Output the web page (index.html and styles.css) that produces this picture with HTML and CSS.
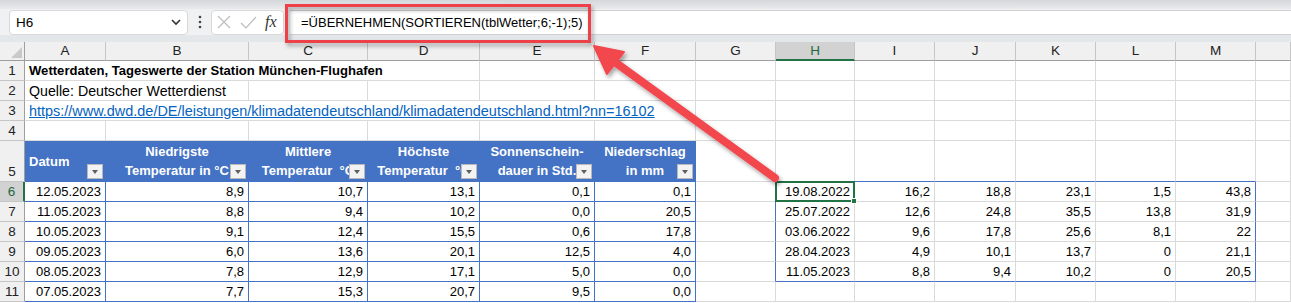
FILE: index.html
```html
<!DOCTYPE html>
<html lang="de">
<head>
<meta charset="UTF-8">
<title>Wetterdaten</title>
<link rel="stylesheet" href="styles.css">
</head>
<body>
<div class="app">
    <div class="ribbon-edge"></div>
    <div class="formula-bar">
        <div class="name-box">
            <span>H6</span>
            <svg width="10" height="7" viewBox="0 0 10 7"><polyline points="1,1 5,5 9,1" fill="none" stroke="#333" stroke-width="1.6"/></svg>
        </div>
        <div class="grip">
            <svg width="4" height="14" viewBox="0 0 4 14"><circle cx="2" cy="2" r="1.3" fill="#444"/><circle cx="2" cy="7" r="1.3" fill="#444"/><circle cx="2" cy="12" r="1.3" fill="#444"/></svg>
        </div>
        <div class="fx-box">
            <svg width="16" height="14" viewBox="0 0 16 14"><path d="M2 1 L14 13 M14 1 L2 13" stroke="#bdbdbd" stroke-width="1.2" fill="none"/></svg>
            <svg width="17" height="13" viewBox="0 0 17 13"><path d="M1 7 L6 12 L16 1" stroke="#bdbdbd" stroke-width="1.2" fill="none"/></svg>
            <span class="fx">fx</span>
        </div>
        <div class="formula-input">=ÜBERNEHMEN(SORTIEREN(tblWetter;6;-1);5)</div>
    </div>
    <div class="bar-gap"></div>

    <table class="sheet">
        <colgroup>
            <col class="w-rh"><col class="w-a"><col class="w-b"><col class="w-c"><col class="w-d"><col class="w-e"><col class="w-f">
            <col class="w-g"><col class="w-h"><col class="w-i"><col class="w-j"><col class="w-k"><col class="w-l"><col class="w-m"><col class="w-n">
        </colgroup>
        <tr class="hdr-row">
            <th class="corner"><span class="corner-tri"></span></th>
            <th class="colhdr">A</th><th class="colhdr">B</th><th class="colhdr">C</th><th class="colhdr">D</th>
            <th class="colhdr">E</th><th class="colhdr">F</th><th class="colhdr">G</th><th class="colhdr sel">H</th>
            <th class="colhdr">I</th><th class="colhdr">J</th><th class="colhdr">K</th><th class="colhdr">L</th>
            <th class="colhdr">M</th><th class="colhdr"></th>
        </tr>
        <tr>
            <td class="rowhdr">1</td>
            <td colspan="4" class="txt title">Wetterdaten, Tageswerte der Station München-Flughafen</td>
            <td></td><td></td><td></td><td></td><td></td><td></td><td></td><td></td><td></td><td></td>
        </tr>
        <tr>
            <td class="rowhdr">2</td>
            <td colspan="2" class="txt">Quelle: Deutscher Wetterdienst</td>
            <td></td><td></td><td></td><td></td><td></td><td></td><td></td><td></td><td></td><td></td><td></td><td></td>
        </tr>
        <tr>
            <td class="rowhdr">3</td>
            <td colspan="6" class="txt"><span class="link">https://www.dwd.de/DE/leistungen/klimadatendeutschland/klimadatendeutschland.html?nn=16102</span></td>
            <td></td><td></td><td></td><td></td><td></td><td></td><td></td><td></td>
        </tr>
        <tr>
            <td class="rowhdr">4</td>
            <td></td><td></td><td></td><td></td><td></td><td></td><td></td><td></td><td></td><td></td><td></td><td></td><td></td><td></td>
        </tr>
        <tr class="tall">
            <td class="rowhdr bottom">5</td>
            <th class="tbl-hdr left">Datum<span class="filter"></span></th>
            <th class="tbl-hdr">Niedrigste<br>Temperatur in °C<span class="filter"></span></th>
            <th class="tbl-hdr">Mittlere<br>Temperatur &nbsp;°C<span class="filter"></span></th>
            <th class="tbl-hdr">Höchste<br>Temperatur &nbsp;°C<span class="filter"></span></th>
            <th class="tbl-hdr">Sonnenschein-<br>dauer in Std.<span class="filter"></span></th>
            <th class="tbl-hdr">Niederschlag<br>in mm<span class="filter"></span></th>
            <td></td>
            <td class="sp-top"></td><td class="sp-top"></td><td class="sp-top"></td><td class="sp-top"></td><td class="sp-top"></td><td class="sp-top"></td>
            <td></td>
        </tr>
        <tr>
            <td class="rowhdr sel">6</td>
            <td class="tb num">12.05.2023</td><td class="tb num">8,9</td><td class="tb num">10,7</td><td class="tb num">13,1</td><td class="tb num">0,1</td><td class="tb num">0,1</td>
            <td class="sp-left"></td>
            <td class="num active">19.08.2022<span class="handle"></span></td><td class="num">16,2</td><td class="num">18,8</td><td class="num">23,1</td><td class="num">1,5</td><td class="num sp-right">43,8</td>
            <td></td>
        </tr>
        <tr>
            <td class="rowhdr">7</td>
            <td class="tb num">11.05.2023</td><td class="tb num">8,8</td><td class="tb num">9,4</td><td class="tb num">10,2</td><td class="tb num">0,0</td><td class="tb num">20,5</td>
            <td class="sp-left"></td>
            <td class="num">25.07.2022</td><td class="num">12,6</td><td class="num">24,8</td><td class="num">35,5</td><td class="num">13,8</td><td class="num sp-right">31,9</td>
            <td></td>
        </tr>
        <tr>
            <td class="rowhdr">8</td>
            <td class="tb num">10.05.2023</td><td class="tb num">9,1</td><td class="tb num">12,4</td><td class="tb num">15,5</td><td class="tb num">0,6</td><td class="tb num">17,8</td>
            <td class="sp-left"></td>
            <td class="num">03.06.2022</td><td class="num">9,6</td><td class="num">17,8</td><td class="num">25,6</td><td class="num">8,1</td><td class="num sp-right">22</td>
            <td></td>
        </tr>
        <tr>
            <td class="rowhdr">9</td>
            <td class="tb num">09.05.2023</td><td class="tb num">6,0</td><td class="tb num">13,6</td><td class="tb num">20,1</td><td class="tb num">12,5</td><td class="tb num">4,0</td>
            <td class="sp-left"></td>
            <td class="num">28.04.2023</td><td class="num">4,9</td><td class="num">10,1</td><td class="num">13,7</td><td class="num">0</td><td class="num sp-right">21,1</td>
            <td></td>
        </tr>
        <tr>
            <td class="rowhdr">10</td>
            <td class="tb num">08.05.2023</td><td class="tb num">7,8</td><td class="tb num">12,9</td><td class="tb num">17,1</td><td class="tb num">5,0</td><td class="tb num">0,0</td>
            <td class="sp-left"></td>
            <td class="num sp-bottom">11.05.2023</td><td class="num sp-bottom">8,8</td><td class="num sp-bottom">9,4</td><td class="num sp-bottom">10,2</td><td class="num sp-bottom">0</td><td class="num sp-right sp-bottom">20,5</td>
            <td></td>
        </tr>
        <tr>
            <td class="rowhdr">11</td>
            <td class="tb num">07.05.2023</td><td class="tb num">7,7</td><td class="tb num">15,3</td><td class="tb num">20,7</td><td class="tb num">9,5</td><td class="tb num">0,0</td>
            <td></td><td></td><td></td><td></td><td></td><td></td><td></td><td></td>
        </tr>
    </table>

    <svg class="callout" width="1291" height="303" viewBox="0 0 1291 303">
        <defs>
            <filter id="shadow" x="-10%" y="-10%" width="130%" height="140%">
                <feDropShadow dx="2" dy="3" stdDeviation="2" flood-color="#000" flood-opacity="0.35"/>
            </filter>
        </defs>
        <rect x="286.5" y="5.5" width="303" height="36" fill="none" stroke="#ee4049" stroke-width="3" filter="url(#shadow)"/>
        <g filter="url(#shadow)" fill="#f1464d" stroke="#f1464d">
            <line x1="775" y1="178" x2="612" y2="60" stroke-width="8" stroke-linecap="round"/>
            <polygon points="594,46 624,52 607,74" stroke-width="2" stroke-linejoin="round"/>
        </g>
    </svg>
</div>
</body>
</html>
```

FILE: styles.css
```css
* {
    box-sizing: border-box;
}

body {
    margin: 0;
    font-family: "Liberation Sans", Arial, sans-serif;
    font-size: 13px;
    color: #000;
    background: #fff;
}

.app {
    position: relative;
    width: 1291px;
    height: 303px;
    overflow: hidden;
}

/* formula bar */
.ribbon-edge {
    height: 9px;
    background: linear-gradient(#d5d8db, #e8eaec);
}

.formula-bar {
    display: flex;
    align-items: center;
    height: 26px;
    padding-left: 9px;
    background: #eff1f3;
}

.name-box {
    display: flex;
    align-items: center;
    justify-content: space-between;
    width: 179px;
    height: 25px;
    padding: 0 6px 0 6px;
    font-size: 13.5px;
    background: #fff;
    border: 1px solid #d8d8d8;
    border-radius: 4px;
}

.grip {
    display: flex;
    justify-content: center;
    width: 23px;
}

.fx-box {
    display: flex;
    align-items: center;
    gap: 8px;
    width: 73px;
    height: 25px;
    padding-left: 4px;
    background: #fff;
    border: 1px solid #d8d8d8;
    border-radius: 4px;
}

.fx {
    font-family: "Liberation Serif", serif;
    font-style: italic;
    font-size: 16px;
    color: #333;
}

.formula-input {
    flex: 1;
    display: flex;
    align-items: center;
    height: 25px;
    margin-left: 6px;
    padding-left: 11px;
    background: #fff;
    border-top: 1px solid #d0d0d0;
    border-bottom: 1px solid #d0d0d0;
}

.bar-gap {
    height: 7px;
    background: #e4e7ea;
}

/* sheet */
.sheet {
    border-collapse: separate;
    border-spacing: 0;
    table-layout: fixed;
    width: 1291px;
}

.w-rh { width: 25px; }
.w-a { width: 81px; }
.w-b { width: 143px; }
.w-c { width: 119px; }
.w-d { width: 112px; }
.w-e { width: 115px; }
.w-f { width: 101px; }
.w-g { width: 80px; }
.w-h { width: 79px; }
.w-i { width: 80px; }
.w-j { width: 81px; }
.w-k { width: 80px; }
.w-l { width: 80px; }
.w-m { width: 80px; }
.w-n { width: 35px; }

.sheet tr {
    height: 20px;
}

.sheet tr.hdr-row {
    height: 19px;
}

.sheet tr.tall {
    height: 41px;
}

.sheet td, .sheet th {
    padding: 0 4px;
    line-height: 16px;
    border-right: 1px solid #dadada;
    border-bottom: 1px solid #dadada;
    white-space: nowrap;
    overflow: hidden;
    font-weight: normal;
    text-align: left;
}

.sheet .txt {
    font-size: 14.2px;
}

.sheet .title {
    font-size: 13.1px;
    font-weight: bold;
}

.sheet .txt .link {
    font-size: 14.45px;
}

.colhdr {
    background: #f0f0f0;
    color: #222;
    font-size: 13.5px;
    text-align: center !important;
    border-right-color: #c6c6c6 !important;
    border-bottom-color: #9f9f9f !important;
}

.colhdr.sel {
    background: #d2d2d2;
    color: #1d6a3f;
    border-bottom: 2px solid #217346 !important;
}

.corner {
    position: relative;
    background: #f0f0f0;
    border-right-color: #9f9f9f !important;
    border-bottom-color: #9f9f9f !important;
}

.corner-tri {
    position: absolute;
    right: 2px;
    bottom: 2px;
    width: 0;
    height: 0;
    border-left: 11px solid transparent;
    border-bottom: 11px solid #c9c9c9;
}

.sheet .rowhdr {
    padding: 0;
    font-size: 13.5px;
    text-align: center;
    background: #f0f0f0;
    color: #222;
    border-right-color: #9f9f9f;
    border-bottom-color: #c6c6c6;
}

.sheet .rowhdr.bottom {
    vertical-align: bottom;
    padding-bottom: 1px;
}

.sheet .rowhdr.sel {
    background: #d2d2d2;
    color: #1d6a3f;
    border-right: 2px solid #217346;
}

.link {
    color: #0563c1;
    text-decoration: underline;
}

/* blue table */
.sheet .tbl-hdr {
    position: relative;
    background: #4472c4;
    color: #fff;
    font-weight: bold;
    text-align: center;
    line-height: 19px;
    vertical-align: middle;
    border-right-color: #4472c4;
    border-bottom-color: #4472c4;
}

.sheet .tbl-hdr.left {
    text-align: left;
}

.filter {
    position: absolute;
    right: 2px;
    bottom: 2px;
    width: 16px;
    height: 15px;
    background: #f3f3f3;
    border: 1px solid #b9b9b9;
}

.filter::after {
    content: "";
    position: absolute;
    left: 4px;
    top: 5px;
    border-left: 3.5px solid transparent;
    border-right: 3.5px solid transparent;
    border-top: 4px solid #5f5f5f;
}

.sheet .tb {
    border-right-color: #4472c4;
    border-bottom-color: #4472c4;
}

.num {
    text-align: right !important;
}

/* spill range */
.sheet .sp-top {
    border-bottom-color: #4a72c0;
}

.sheet .sp-left {
    border-right-color: #4a72c0;
}

.sheet .sp-right {
    border-right-color: #4a72c0;
}

.sheet .sp-bottom {
    border-bottom-color: #4a72c0;
}

.sheet .active {
    position: relative;
    overflow: visible;
}

.active::before {
    content: "";
    position: absolute;
    left: -1px;
    top: -1px;
    right: -1px;
    bottom: -1px;
    border: 2px solid #217346;
}

.handle {
    position: absolute;
    right: -3px;
    bottom: -3px;
    width: 6px;
    height: 6px;
    background: #217346;
    border: 1px solid #fff;
}

.callout {
    position: absolute;
    left: 0;
    top: 0;
    pointer-events: none;
}
```
